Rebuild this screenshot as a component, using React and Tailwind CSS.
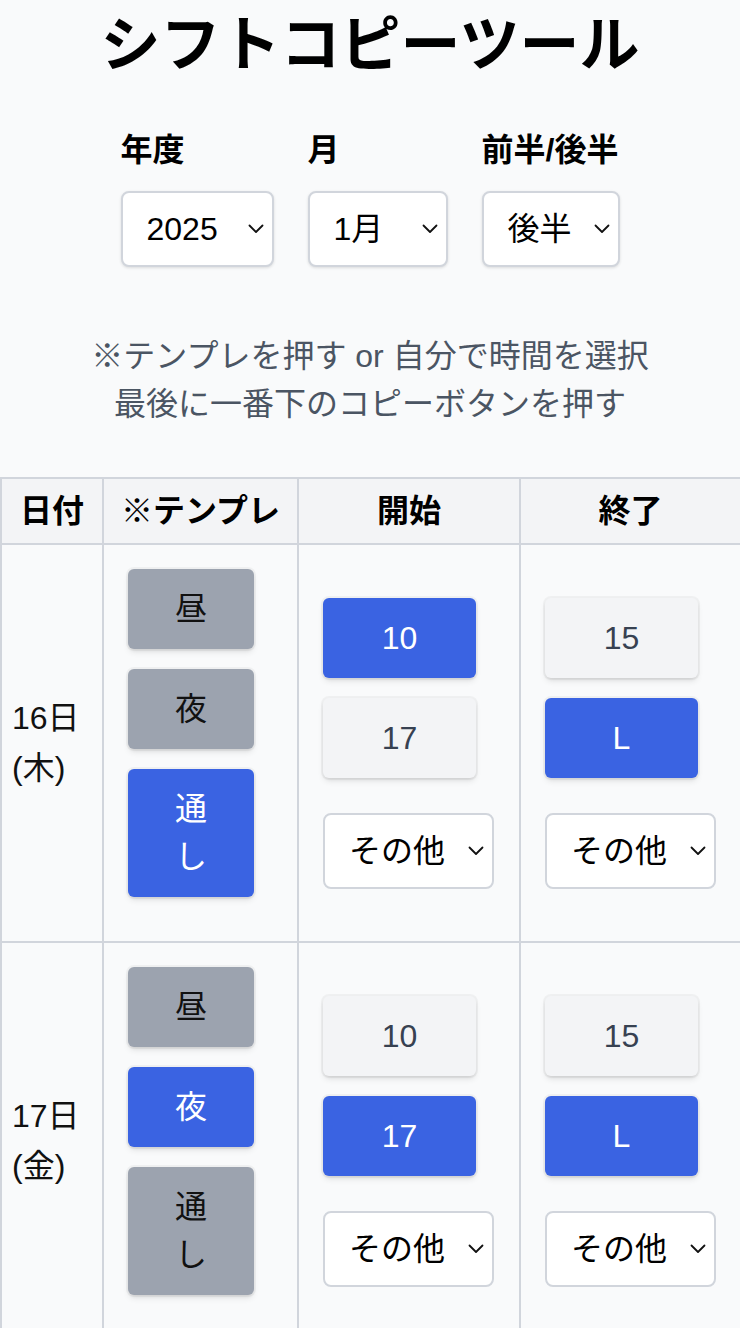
import React from "react";

const FONT = { fontFamily: '"Liberation Sans", "Noto Sans CJK JP", sans-serif' };

function Chevron() {
  return (
    <svg width="16" height="10" viewBox="0 0 16 10" className="shrink-0">
      <path d="M1.5 1.5 L8 8 L14.5 1.5" fill="none" stroke="#111" strokeWidth="1.8" strokeLinecap="round" strokeLinejoin="round" />
    </svg>
  );
}

function FakeSelect({ value, w, shadow }) {
  return (
    <div
      className={`flex h-[76px] items-center justify-between rounded-[8px] border-2 border-gray-300 bg-white pl-[24px] pr-[8px] text-[32px] leading-[48px] text-black ${shadow ? "shadow-[0_1px_3px_rgba(0,0,0,0.12)]" : ""}`}
      style={{ width: w }}
    >
      <span>{value}</span>
      <Chevron />
    </div>
  );
}

const BTN_SHADOW = "shadow-[0_0_0_2px_rgba(0,0,0,0.04),0_4px_6px_-1px_rgba(0,0,0,0.1),0_2px_4px_-2px_rgba(0,0,0,0.1)]";

function TplButton({ label, active }) {
  return (
    <div
      className={`mb-5 w-[126px] rounded-[6px] px-[32px] py-[16px] text-center text-[32px] leading-[48px] ${BTN_SHADOW} ${
        active ? "bg-[#3a63e2] text-white" : "bg-[#9ca3af] text-[#111]"
      }`}
    >
      {label}
    </div>
  );
}

function TimeButton({ label, active, mb }) {
  return (
    <div
      className={`flex h-[80px] w-[153px] items-center justify-center rounded-[6px] text-[32px] leading-[48px] ${BTN_SHADOW} ${mb} ${
        active ? "bg-[#3a63e2] text-white" : "bg-[#f3f4f6] text-[#374151]"
      }`}
    >
      {label}
    </div>
  );
}

function Row({ date, dow, tpl, start, end }) {
  return (
    <>
      <div className="flex flex-col justify-center border-l-2 border-t-2 border-gray-300 pl-[10px] text-[32px] leading-[50px] text-[#111]">
        <div>{date}</div>
        <div>{dow}</div>
      </div>
      <div className="border-l-2 border-t-2 border-gray-300 p-6">
        <TplButton label="昼" active={tpl === 0} />
        <TplButton label="夜" active={tpl === 1} />
        <TplButton label="通し" active={tpl === 2} />
      </div>
      <div className="flex flex-col justify-center border-l-2 border-t-2 border-gray-300 px-6">
        <TimeButton label="10" active={start === 0} mb="mb-5" />
        <TimeButton label="17" active={start === 1} mb="mb-[35px]" />
        <FakeSelect value="その他" w={171} />
      </div>
      <div className="flex flex-col justify-center border-l-2 border-t-2 border-gray-300 px-6">
        <TimeButton label="15" active={end === 0} mb="mb-5" />
        <TimeButton label="L" active={end === 1} mb="mb-[35px]" />
        <FakeSelect value="その他" w={171} />
      </div>
    </>
  );
}

export default function App() {
  return (
    <div className="min-h-screen w-[740px] overflow-hidden bg-[#f9fafb] text-black" style={FONT}>
      <h1 className="pt-[10px] text-center text-[60px] font-bold leading-[72px] text-black">シフトコピーツール</h1>

      <div className="mt-[44px] flex justify-center gap-[34px]">
        <div className="flex flex-col">
          <div className="text-[32px] font-bold leading-[48px]">年度</div>
          <div className="mt-[17px]"><FakeSelect value="2025" w={153} shadow /></div>
        </div>
        <div className="flex flex-col">
          <div className="text-[32px] font-bold leading-[48px]">月</div>
          <div className="mt-[17px]"><FakeSelect value="1月" w={140} shadow /></div>
        </div>
        <div className="flex flex-col">
          <div className="text-[32px] font-bold leading-[48px]">前半/後半</div>
          <div className="mt-[17px]"><FakeSelect value="後半" w={138} shadow /></div>
        </div>
      </div>

      <div className="mt-[65px] text-center text-[32px] leading-[48px] text-[#4b5563]">
        <div>※テンプレを押す or 自分で時間を選択</div>
        <div>最後に一番下のコピーボタンを押す</div>
      </div>

      <div className="mt-[49px] grid grid-cols-[102px_195px_222px_221px]">
        <div className="flex h-[66px] items-center justify-center border-l-2 border-t-2 border-gray-300 bg-[#f3f4f6] text-[32px] font-bold">日付</div>
        <div className="flex h-[66px] items-center justify-center border-l-2 border-t-2 border-gray-300 bg-[#f3f4f6] text-[32px] font-bold">※テンプレ</div>
        <div className="flex h-[66px] items-center justify-center border-l-2 border-t-2 border-gray-300 bg-[#f3f4f6] text-[32px] font-bold">開始</div>
        <div className="flex h-[66px] items-center justify-center border-l-2 border-t-2 border-gray-300 bg-[#f3f4f6] text-[32px] font-bold">終了</div>
        <Row date="16日" dow="(木)" tpl={2} start={0} end={1} />
        <Row date="17日" dow="(金)" tpl={1} start={1} end={1} />
      </div>
    </div>
  );
}
